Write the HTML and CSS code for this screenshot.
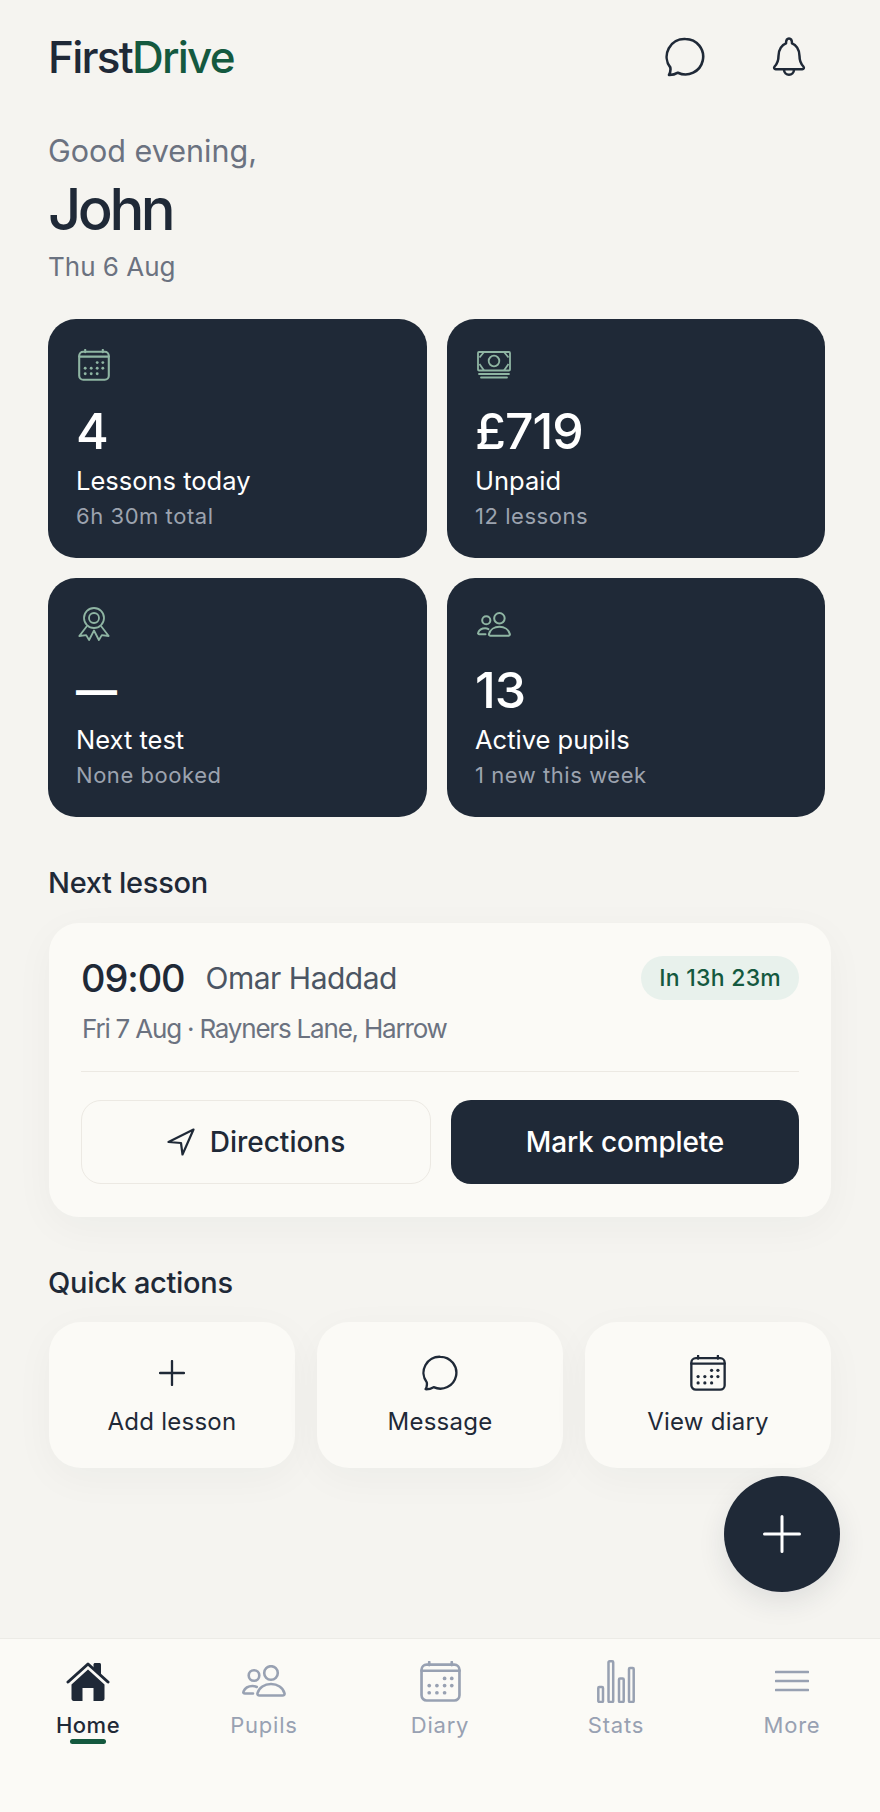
FILE: index.html
```html
<!DOCTYPE html>
<html lang="en">
<head>
<meta charset="utf-8">
<title>FirstDrive</title>
<link rel="stylesheet" href="styles.css">
</head>
<body>
<svg class="sprite" aria-hidden="true">
  <symbol id="i-chat" viewBox="0 0 40 40"><path d="M20.5 2a17.7 17.7 0 1 1-7.6 33.7c-2.6 1.6-5.6 2.4-8.9 2.3 1.3-2.300 1.800-4.800 1.300-7.600A17.700 17.700 0 0 1 20.500 2z" fill="none" stroke="currentColor" stroke-width="2.6" stroke-linejoin="round"/></symbol>
  <symbol id="i-bell" viewBox="0 0 34 40"><path d="M2.600 29.500c2.600-2.700 3.900-5.700 3.900-10.500 0-6.800 3.700-11.300 7.500-12.600C14 3.800 15 1.500 17 1.500s3 2.300 3 4.900c3.800 1.300 7.500 5.800 7.500 12.600 0 4.800 1.300 7.800 3.900 10.500 1 1.100.4 2.700-1.100 2.700H3.700c-1.500 0-2.100-1.600-1.100-2.700z" fill="none" stroke="currentColor" stroke-width="2.500" stroke-linejoin="round"/><path d="M12 32.500c0 7 10 7 10 0" fill="none" stroke="currentColor" stroke-width="2.500"/></symbol>
  <symbol id="i-cal" viewBox="0 0 40 40"><g fill="none" stroke="currentColor" stroke-width="2.600" stroke-linecap="round"><rect x="1.500" y="3.500" width="37" height="35" rx="5"/><path d="M1.500 9.500h37M9 1v3M31 1v3"/></g><g fill="currentColor"><circle cx="24" cy="17" r="1.800"/><circle cx="31" cy="17" r="1.800"/><circle cx="9" cy="24" r="1.800"/><circle cx="16.500" cy="24" r="1.800"/><circle cx="24" cy="24" r="1.800"/><circle cx="31" cy="24" r="1.800"/><circle cx="9" cy="31" r="1.800"/><circle cx="16.500" cy="31" r="1.800"/><circle cx="24" cy="31" r="1.800"/></g></symbol>
  <symbol id="i-money" viewBox="0 0 34 28"><g fill="none" stroke="currentColor" stroke-width="1.800"><rect x="1" y="1" width="32" height="18.500" rx="1"/><circle cx="17" cy="10" r="5.300"/><path d="M7 1 2.500 6.500M2.500 13 7 19.500M27 1l4.500 5.500M31.500 13 27 19.500"/><path d="M2 23h30M4 26.500h26" stroke-linecap="round"/></g></symbol>
  <symbol id="i-medal" viewBox="0 0 32 34"><g fill="none" stroke="currentColor" stroke-width="1.800" stroke-linejoin="round"><circle cx="16" cy="11" r="10"/><circle cx="16" cy="11" r="5"/><path d="M9 19 1.300 29l6.900-.9 2.900 4.900 4.900-9.500 4.900 9.500 2.900-4.900 6.900.9L23 19"/></g></symbol>
  <symbol id="i-users" viewBox="0 0 44 32"><g fill="none" stroke="currentColor" stroke-width="2.600" stroke-linejoin="round" stroke-linecap="round"><circle cx="29" cy="8" r="6.800"/><path d="M17.500 30.500c-1.500 0-2.300-1-2-2.200C17 22.500 22.500 19 29 19s12 3.500 13.500 9.300c.3 1.200-.5 2.200-2 2.200z"/><circle cx="12" cy="10.500" r="5.300"/><path d="M11 28.500H3c-1.300 0-2-1-1.500-2 1.500-3.500 5-5.500 9-5.500 1.500 0 3 .3 4.300 1"/></g></symbol>
  <symbol id="i-home" viewBox="0 0 44 40"><path d="M27.500 3.500c0-.8.700-1.500 1.500-1.500h4.500c.8 0 1.500.7 1.500 1.500V14l-7.500-6.500z" fill="currentColor"/><path d="M2 21 22 3l20 18" fill="none" stroke="currentColor" stroke-width="3" stroke-linecap="round" stroke-linejoin="round"/><path d="M5.500 23.500 22 8.500l16.500 15v14.300c0 1.200-1 2.200-2.200 2.200H27.500V27h-11v13H7.700c-1.200 0-2.200-1-2.200-2.200z" fill="currentColor"/></symbol>
  <symbol id="i-stats" viewBox="0 0 38 43"><g fill="none" stroke="currentColor" stroke-width="2.500" stroke-linejoin="round"><rect x="1.300" y="27" width="4.700" height="15" rx="1"/><rect x="11.500" y="1.300" width="4.700" height="40.700" rx="1"/><rect x="22" y="18.500" width="4.700" height="23.500" rx="1"/><rect x="32" y="8" width="4.700" height="34" rx="1"/></g></symbol>
  <symbol id="i-more" viewBox="0 0 34 22"><path d="M1 2h32M1 11h32M1 20h32" fill="none" stroke="currentColor" stroke-width="2.600" stroke-linecap="round"/></symbol>
  <symbol id="i-nav" viewBox="0 0 28 28"><path d="M26.500 1.500 1.500 14l12.500 1 1.500 11.500z" fill="none" stroke="currentColor" stroke-width="2.200" stroke-linejoin="round"/></symbol>
  <symbol id="i-plus" viewBox="0 0 26 26"><path d="M13 1v24M1 13h24" fill="none" stroke="currentColor" stroke-width="2.300" stroke-linecap="round"/></symbol>
  <symbol id="i-plus-lg" viewBox="0 0 38 38"><path d="M19 1.500v35M1.500 19h35" fill="none" stroke="currentColor" stroke-width="3" stroke-linecap="round"/></symbol>
</svg>

<div class="app">
  <main class="main">
    <header class="topbar">
      <div class="logo">First<span class="logo-accent">Drive</span></div>
      <div class="top-icons">
        <svg class="icon-chat"><use href="#i-chat"/></svg>
        <svg class="icon-bell"><use href="#i-bell"/></svg>
      </div>
    </header>

    <p class="greeting">Good evening,</p>
    <h1 class="name">John</h1>
    <p class="date">Thu 6 Aug</p>

    <section class="stats">
      <article class="stat">
        <div class="stat-icon"><svg class="si-cal"><use href="#i-cal"/></svg></div>
        <div class="stat-value">4</div>
        <div class="stat-label">Lessons today</div>
        <div class="stat-sub">6h 30m total</div>
      </article>
      <article class="stat">
        <div class="stat-icon"><svg class="si-money"><use href="#i-money"/></svg></div>
        <div class="stat-value">£719</div>
        <div class="stat-label">Unpaid</div>
        <div class="stat-sub">12 lessons</div>
      </article>
      <article class="stat">
        <div class="stat-icon"><svg class="si-medal"><use href="#i-medal"/></svg></div>
        <div class="stat-value stat-value-dash">—</div>
        <div class="stat-label">Next test</div>
        <div class="stat-sub">None booked</div>
      </article>
      <article class="stat">
        <div class="stat-icon"><svg class="si-users"><use href="#i-users"/></svg></div>
        <div class="stat-value">13</div>
        <div class="stat-label">Active pupils</div>
        <div class="stat-sub">1 new this week</div>
      </article>
    </section>

    <h2 class="section-title">Next lesson</h2>
    <section class="lesson">
      <div class="lesson-head">
        <span class="lesson-time">09:00</span>
        <span class="lesson-name">Omar Haddad</span>
        <span class="pill">In 13h 23m</span>
      </div>
      <p class="lesson-where">Fri 7 Aug · Rayners Lane, Harrow</p>
      <div class="rule"></div>
      <div class="lesson-actions">
        <button class="btn btn-ghost"><svg class="icon-nav"><use href="#i-nav"/></svg>Directions</button>
        <button class="btn btn-dark">Mark complete</button>
      </div>
    </section>

    <h2 class="section-title">Quick actions</h2>
    <section class="quick">
      <div class="quick-card">
        <div class="quick-icon"><svg class="qi-plus"><use href="#i-plus"/></svg></div>
        <div class="quick-label">Add lesson</div>
      </div>
      <div class="quick-card">
        <div class="quick-icon"><svg class="qi-chat"><use href="#i-chat"/></svg></div>
        <div class="quick-label">Message</div>
      </div>
      <div class="quick-card">
        <div class="quick-icon"><svg class="qi-cal"><use href="#i-cal"/></svg></div>
        <div class="quick-label">View diary</div>
      </div>
    </section>
  </main>

  <button class="fab" aria-label="Add"><svg class="fab-plus"><use href="#i-plus-lg"/></svg></button>

  <nav class="tabs">
    <div class="tab tab-active">
      <div class="tab-icon"><svg class="ti-home"><use href="#i-home"/></svg></div>
      <div class="tab-label">Home</div>
      <div class="tab-mark"></div>
    </div>
    <div class="tab">
      <div class="tab-icon"><svg class="ti-users"><use href="#i-users"/></svg></div>
      <div class="tab-label">Pupils</div>
    </div>
    <div class="tab">
      <div class="tab-icon"><svg class="ti-cal"><use href="#i-cal"/></svg></div>
      <div class="tab-label">Diary</div>
    </div>
    <div class="tab">
      <div class="tab-icon"><svg class="ti-stats"><use href="#i-stats"/></svg></div>
      <div class="tab-label">Stats</div>
    </div>
    <div class="tab">
      <div class="tab-icon"><svg class="ti-more"><use href="#i-more"/></svg></div>
      <div class="tab-label">More</div>
    </div>
  </nav>
</div>
</body>
</html>
```

FILE: styles.css
```css
* { box-sizing: border-box; }
html, body { margin: 0; padding: 0; }
body {
  background: #f5f4f0;
  color: #1f2937;
  font-family: Inter, "Liberation Sans", sans-serif;
}
p, h1, h2 { margin: 0; font-weight: 400; }
svg { display: block; }
.sprite { position: absolute; width: 0; height: 0; overflow: hidden; }

.app {
  position: relative;
  width: 880px;
  height: 1812px;
  display: flex;
  flex-direction: column;
  overflow: hidden;
}
.main { padding: 33px 49px 0 48px; }

.topbar { display: flex; align-items: center; justify-content: space-between; height: 48px; }
.logo { font-size: 44px; line-height: 48px; font-weight: 500; letter-spacing: -1.76px; }
.logo-accent { color: #14593f; }
.top-icons { display: flex; align-items: center; gap: 67px; margin-right: 25px; margin-top: -1px; }
.icon-chat { width: 40px; height: 40px; }
.icon-bell { width: 34px; height: 40px; }

.greeting { margin-top: 52px; font-size: 30.500px; line-height: 36px; color: #6b7280; }
.name { margin-top: 8px; font-size: 58px; line-height: 64px; font-weight: 500; letter-spacing: -3.500px; }
.date { margin-top: 10px; font-size: 26px; line-height: 32px; color: #6b7280; }

.stats {
  margin-top: 36px;
  width: 777px;
  display: grid;
  grid-template-columns: 379px 378px;
  gap: 20px;
}
.stat {
  background: #1f2937;
  border-radius: 28px;
  height: 239px;
  padding: 30px 28px 0;
  color: #fff;
}
.stat-icon { height: 32px; padding-left: 1.500px; display: flex; align-items: center; color: #8fb5a3; }
.si-cal { width: 32px; height: 32px; }
.si-money { width: 34px; height: 28px; }
.si-medal { width: 32px; height: 34px; }
.si-users { width: 34px; height: 25px; }
.stat-value { margin-top: 22px; font-size: 50px; line-height: 56px; font-weight: 500; letter-spacing: -1px; }
.stat-value-dash { font-size: 41px; font-weight: 700; letter-spacing: 0; }
.stat-label { margin-top: 6px; font-size: 25.500px; line-height: 32px; }
.stat-sub { margin-top: 5px; font-size: 22px; line-height: 28px; color: #9ca3af; letter-spacing: .55px; }

.section-title { margin-top: 48px; font-size: 29px; line-height: 36px; font-weight: 500; letter-spacing: -.3px; }

.lesson {
  margin: 22px 0 0 1px;
  height: 294px;
  padding: 33px 32px 0;
  background: #fbfaf6;
  border-radius: 30px;
  box-shadow: 0 10px 40px rgba(31, 41, 55, .04);
}
.lesson-head { display: flex; align-items: center; height: 44px; }
.lesson-time { font-size: 38px; font-weight: 500; letter-spacing: -1.100px; }
.lesson-name { margin-left: 21px; font-size: 30px; color: #4b5563; letter-spacing: -.5px; }
.pill {
  margin-left: auto;
  height: 44px;
  padding: 0 18px;
  display: flex;
  align-items: center;
  border-radius: 22px;
  background: #e8f1ec;
  color: #14593f;
  font-size: 23px;
  font-weight: 500;
  letter-spacing: .25px;
}
.lesson-where { margin: 13px 0 0 1px; font-size: 26px; line-height: 32px; color: #6b7280; letter-spacing: -1.200px; }
.rule { margin-top: 26px; height: 1px; background: #ece9e3; }
.lesson-actions { margin-top: 28px; display: flex; gap: 20px; }
.btn {
  flex: 1 1 0;
  height: 84px;
  border-radius: 20px;
  font-family: inherit;
  font-size: 28px;
  font-weight: 500;
  display: flex;
  align-items: center;
  justify-content: center;
}
.btn-ghost { background: transparent; border: 1px solid #ece9e3; color: #1f2937; gap: 15px; }
.btn-dark { background: #1f2937; border: 0; color: #fff; letter-spacing: -.15px; }
.icon-nav { width: 28px; height: 28px; }

.quick { margin: 21px 0 0 1px; display: grid; grid-template-columns: repeat(3, 246px); gap: 22px; }
.quick-card {
  height: 146px;
  padding-top: 33px;
  background: #fbfaf6;
  border-radius: 32px;
  box-shadow: 0 10px 40px rgba(31, 41, 55, .04);
  display: flex;
  flex-direction: column;
  align-items: center;
}
.quick-icon { height: 36px; display: flex; align-items: center; }
.qi-plus { width: 26px; height: 26px; }
.qi-chat { width: 36px; height: 36px; }
.qi-cal { width: 36px; height: 36px; }
.quick-label { margin-top: 16px; font-size: 24px; line-height: 30px; letter-spacing: .25px; }

.fab {
  position: absolute;
  right: 40px;
  bottom: 220px;
  width: 116px;
  height: 116px;
  border: 0;
  border-radius: 50%;
  background: #1f2937;
  color: #fff;
  display: flex;
  align-items: center;
  justify-content: center;
  box-shadow: 0 10px 28px rgba(31, 41, 55, .1);
}
.fab-plus { width: 38px; height: 38px; }

.tabs {
  margin-top: auto;
  height: 174px;
  padding-top: 21px;
  background: #fbfaf6;
  border-top: 1px solid #ecebe6;
  display: grid;
  grid-template-columns: repeat(5, 176px);
}
.tab { display: flex; flex-direction: column; align-items: center; color: #98a1b2; }
.tab-active { color: #1f2937; }
.tab-icon { height: 42px; display: flex; align-items: center; }
.ti-home { width: 44px; height: 40px; }
.ti-users { width: 44px; height: 32px; }
.ti-cal { width: 41px; height: 41px; }
.ti-stats { width: 38px; height: 43px; }
.ti-more { width: 34px; height: 22px; }
.tab-label { margin-top: 10px; font-size: 22px; line-height: 26px; font-weight: 400; letter-spacing: .8px; }
.tab-active .tab-label { font-weight: 500; letter-spacing: .5px; }
.tab-mark { margin-top: 1px; width: 36px; height: 5px; border-radius: 3px; background: #14593f; }
```
